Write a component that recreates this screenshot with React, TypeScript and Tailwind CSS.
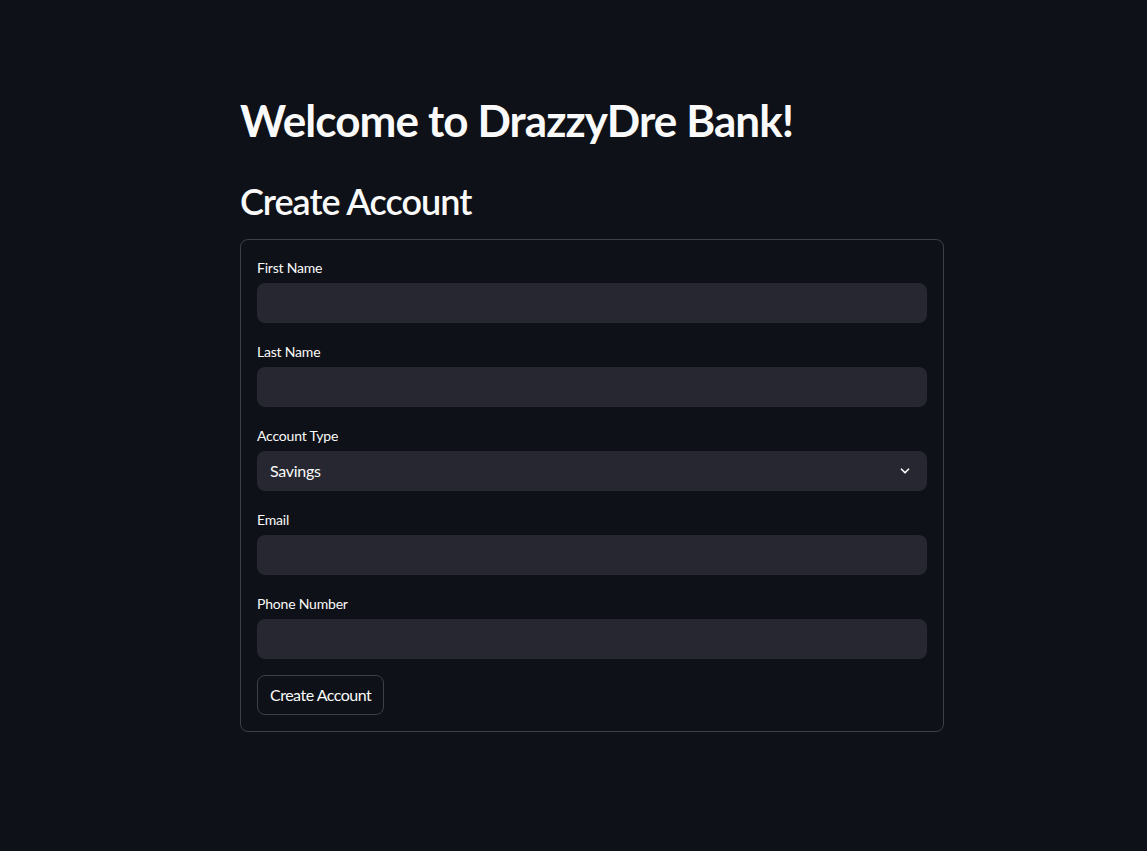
import React from "react";

const font = { fontFamily: '"Source Sans Pro", Lato, "Noto Sans", sans-serif' };

function Field({ label }: { label: string }) {
  return (
    <div className="flex flex-col">
      <label className="text-[14px] leading-[23px] mb-[4px] text-[#fafafa] tracking-[-0.2px]">{label}</label>
      <input
        className="h-[40px] w-full rounded-[8px] bg-[#262730] px-[12px] text-[16px] text-[#fafafa] outline-none"
        type="text"
      />
    </div>
  );
}

export default function App() {
  return (
    <div className="min-h-[851px] w-full bg-[#0e1117] text-[#fafafa]" style={font}>
      <div className="ml-[240px] w-[704px] pt-[94px]">
        <h1 className="text-[44px] font-bold leading-[53px] tracking-[-0.9px]">Welcome to DrazzyDre Bank!</h1>
        <h2 className="mt-[33px] text-[36px] font-semibold leading-[43px] tracking-[-1px]">Create Account</h2>
        <div className="mt-[16px] rounded-[8px] border border-[#3e4047] p-[16px] flex flex-col gap-[17px]">
          <Field label="First Name" />
          <Field label="Last Name" />
          <div className="flex flex-col">
            <label className="text-[14px] leading-[23px] mb-[4px] tracking-[-0.2px]">Account Type</label>
            <div className="flex h-[40px] items-center justify-between rounded-[8px] bg-[#262730] pl-[13px] pr-[15px]">
              <span className="text-[16px] tracking-[-0.3px]">Savings</span>
              <svg width="14" height="14" viewBox="0 0 24 24" fill="none" stroke="#fafafa" strokeWidth="3" strokeLinecap="round" strokeLinejoin="round">
                <path d="M6 9l6 6 6-6" />
              </svg>
            </div>
          </div>
          <Field label="Email" />
          <Field label="Phone Number" />
          <div className="-mt-[1px]">
            <button className="h-[40px] rounded-[8px] border border-[#3e4047] bg-[#0e1117] px-[12px] text-[16px] text-[#fafafa] tracking-[-0.5px]">
              Create Account
            </button>
          </div>
        </div>
      </div>
    </div>
  );
}
